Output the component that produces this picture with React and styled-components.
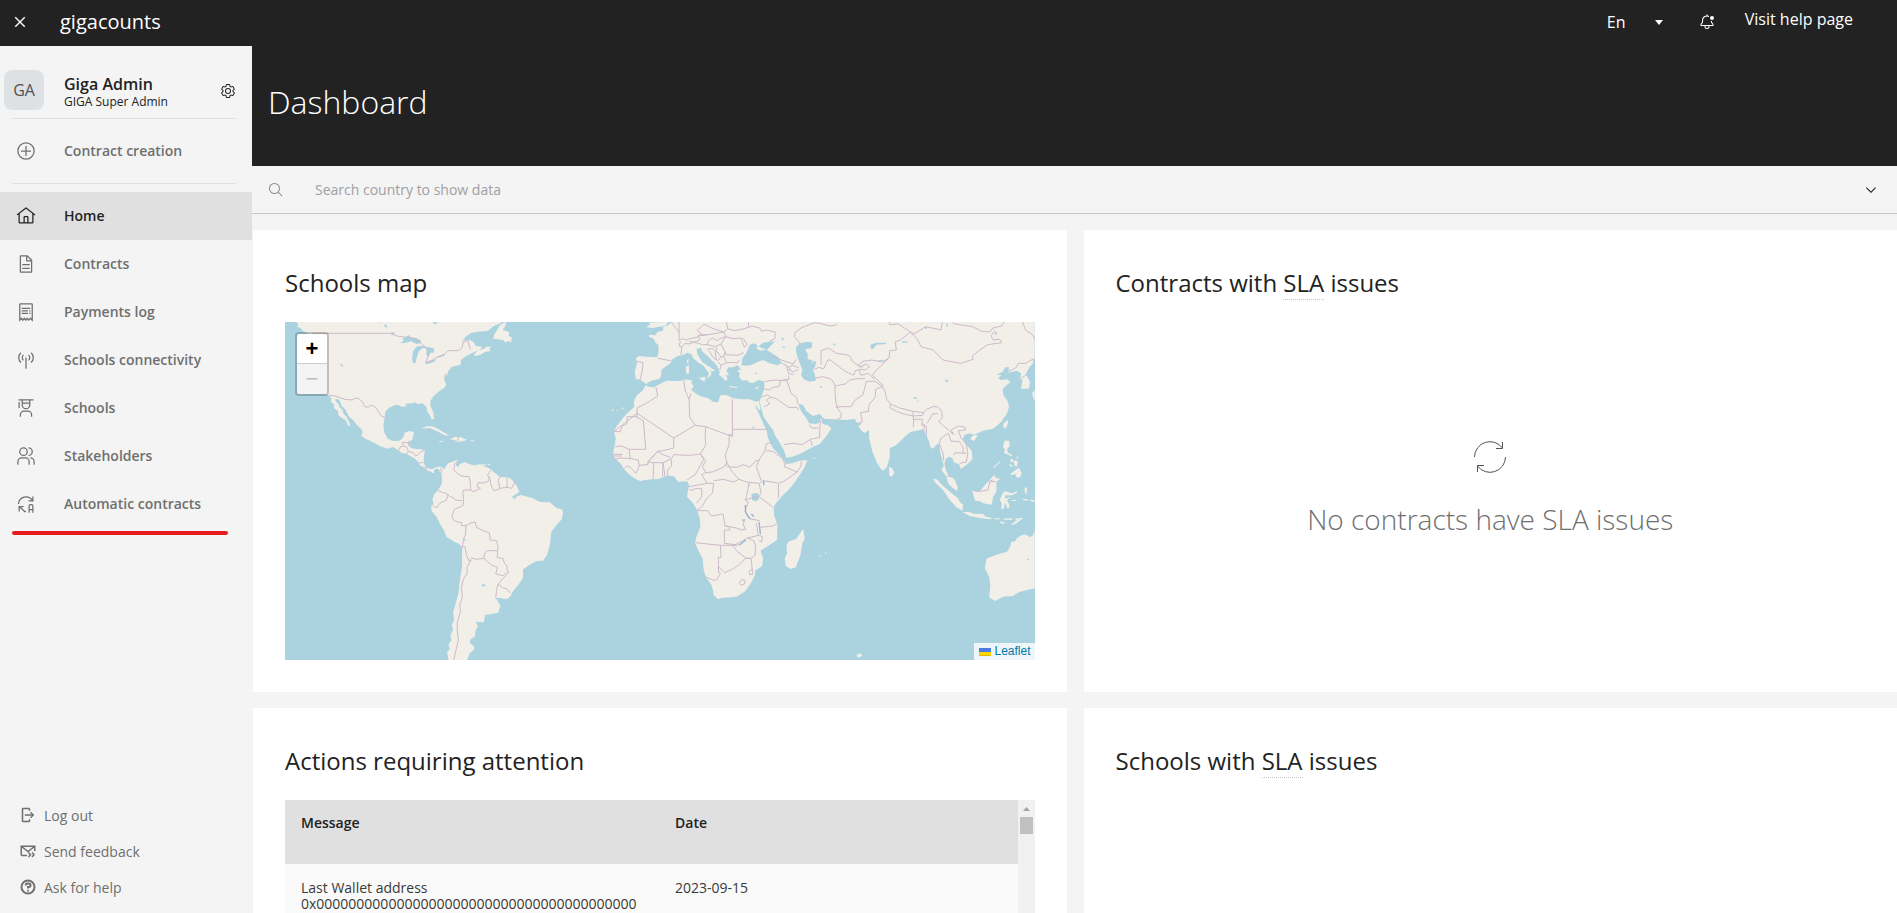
import React from 'react';
import styled, { createGlobalStyle } from 'styled-components';

const Global = createGlobalStyle`
  * { box-sizing: border-box; }
  body { margin: 0; font-family: 'Open Sans', sans-serif; background: #f4f4f4; color: #222222; }
  button, input, select { font: inherit; color: inherit; border: 0; background: none; padding: 0; margin: 0; }
  button { cursor: pointer; }
  h1, h2, p { margin: 0; }
  h1, h2 { font-weight: 400; }
  a { color: inherit; text-decoration: none; }
`;

const Page = styled.div`
  display: flex;
  flex-direction: column;
  height: 100vh;
  overflow: hidden;
`;

const TopBar = styled.header`
  display: flex;
  flex: none;
  height: 46px;
  background: #222222;
  color: #ffffff;
`;

const CloseButton = styled.button`
  display: flex;
  align-items: center;
  justify-content: center;
  width: 40px;
  height: 44px;
`;

const Brand = styled.a`
  margin-left: 20px;
  font-size: 20px;
  line-height: 44px;
`;

const TopActions = styled.div`
  display: flex;
  align-items: center;
  height: 44px;
  margin-left: auto;
  padding-right: 44px;
`;

const Language = styled.label`
  display: grid;
  grid-template-columns: 1fr 16px;
  align-items: center;
  width: 60px;
  margin-right: 32px;

  select {
    grid-area: 1 / 1 / 2 / 3;
    appearance: none;
    width: 100%;
    font-size: 16px;
    line-height: 24px;
  }

  svg {
    grid-area: 1 / 2 / 2 / 3;
    pointer-events: none;
  }
`;

const BellButton = styled.button`
  display: flex;
  margin-right: 30px;
`;

const HelpLink = styled.a`
  padding-bottom: 6px;
  font-size: 16px;
  line-height: 24px;
`;

const Body = styled.div`
  display: flex;
  flex: 1;
  min-height: 0;
`;

const Sidebar = styled.aside`
  display: flex;
  flex: none;
  flex-direction: column;
  width: 252px;
  padding-bottom: 8px;
`;

const User = styled.div`
  display: flex;
  align-items: center;
  height: 72px;
  padding: 16px 16px 0 4px;
`;

const Avatar = styled.span`
  display: flex;
  align-items: center;
  justify-content: center;
  width: 40px;
  height: 40px;
  margin-right: 20px;
  border-radius: 8px;
  background: #dde1e4;
  color: #525252;
  font-size: 16px;
`;

const UserText = styled.div`
  padding-top: 4px;
`;

const UserName = styled.p`
  font-size: 16px;
  font-weight: 600;
  line-height: 20px;
`;

const UserRole = styled.p`
  font-size: 12px;
  line-height: 16px;
`;

const SettingsButton = styled.button`
  display: flex;
  margin-left: auto;
  padding-top: 2px;
`;

const Rule = styled.hr`
  width: 224px;
  height: 1px;
  margin: 0 12px;
  border: 0;
  background: #e0e0e0;
`;

const NavGroup = styled.nav`
  padding: 8px 0;
`;

const NavItem = styled.a`
  display: flex;
  align-items: center;
  gap: 28px;
  height: 48px;
  padding-left: 16px;
  background: ${(p) => (p.$active ? '#e0e0e0' : 'transparent')};
  color: ${(p) => (p.$active ? '#222222' : '#6f6f6f')};
  font-size: 14px;
  font-weight: 600;

  span { padding-bottom: 2px; }
`;

const Marker = styled.div`
  width: 216px;
  height: 4px;
  margin: 3px 12px;
  border-radius: 2px;
  background: #e71d1d;
`;

const FooterNav = styled.nav`
  margin-top: auto;
`;

const FooterLink = styled.a`
  display: flex;
  align-items: center;
  gap: 8px;
  height: 36px;
  padding-left: 20px;
  color: #6f6f6f;
  font-size: 14px;
`;

const Main = styled.main`
  display: flex;
  flex: 1;
  flex-direction: column;
  min-width: 0;
  overflow: hidden;
`;

const Banner = styled.div`
  flex: none;
  height: 120px;
  padding: 34px 16px;
  background: #222222;
  color: #ffffff;

  h1 {
    font-size: 32px;
    font-weight: 300;
    line-height: 44px;
  }
`;

const SearchBar = styled.label`
  display: flex;
  flex: none;
  align-items: center;
  height: 48px;
  padding: 0 18px 0 16px;
  border-bottom: 1px solid #c6c6c6;

  svg:first-child { color: #8d8d8d; }

  input {
    flex: 1;
    margin-left: 31px;
    outline: 0;
    font-size: 14px;
    line-height: 20px;
  }

  input::placeholder { color: #a0a0a0; opacity: 1; }
`;

const Grid = styled.div`
  display: grid;
  grid-template-columns: minmax(0, 1fr) minmax(0, 1fr);
  gap: 16px 17px;
  padding: 16px 0 0 1px;
`;

const Card = styled.section`
  display: flex;
  flex-direction: column;
  min-height: 462px;
  padding: 32px;
  background: #ffffff;
`;

const CardTitle = styled.h2`
  height: 60px;
  font-size: 24px;
  line-height: 42px;

  abbr {
    display: inline-block;
    line-height: 32px;
    border-bottom: 1px dotted #c6c6c6;
    text-decoration: none;
  }
`;

const EmptyState = styled.div`
  display: flex;
  flex: 1;
  flex-direction: column;
  align-items: center;
  justify-content: center;
  gap: 26px;
  padding-bottom: 2px;
  color: #6f6f6f;
  font-size: 28px;
  font-weight: 300;
  line-height: 40px;
`;

const MapFrame = styled.div`
  position: relative;
  height: 338px;
  overflow: hidden;
  background: #aad3df;
`;

const MapDrawing = styled.svg`
  display: block;
  width: 100%;
  height: 100%;
`;

const ZoomControl = styled.div`
  position: absolute;
  top: 10px;
  left: 10px;
  border: 2px solid rgba(0, 0, 0, 0.2);
  border-radius: 4px;
  background-clip: padding-box;
`;

const ZoomButton = styled.button`
  display: block;
  width: 30px;
  height: 30px;
  border-bottom: ${(p) => (p.disabled ? '0' : '1px solid #cccccc')};
  border-radius: ${(p) => (p.disabled ? '0 0 2px 2px' : '2px 2px 0 0')};
  background: ${(p) => (p.disabled ? '#f4f4f4' : '#ffffff')};
  color: ${(p) => (p.disabled ? '#bbbbbb' : '#000000')};
  font: ${(p) => (p.disabled ? 400 : 700)} 22px/30px 'Liberation Sans', sans-serif;
`;

const Attribution = styled.a`
  position: absolute;
  right: 0;
  bottom: 0;
  display: flex;
  align-items: center;
  gap: 3px;
  padding: 0 4px 0 5px;
  background: rgba(255, 255, 255, 0.8);
  color: #0078a8;
  font: 12px/17px 'Liberation Sans', sans-serif;
`;

const TableFrame = styled.div`
  display: flex;
  height: 338px;
`;

const Table = styled.table`
  flex: 1;
  border-collapse: collapse;
  table-layout: fixed;
  font-size: 14px;
  text-align: left;

  th, td {
    padding: 16px;
    vertical-align: top;
  }

  th {
    height: 64px;
    background: #e0e0e0;
    font-weight: 600;
    line-height: 14px;
  }

  th:first-child { width: 374px; }

  td {
    background: #fafafa;
    color: #393939;
    line-height: 16px;
  }
`;

const ScrollTrack = styled.div`
  width: 17px;
  padding: 0 2px;
  background: #f1f1f1;

  svg { display: block; width: 13px; height: 17px; }
`;

const ScrollThumb = styled.div`
  height: 17px;
  background: #c1c1c1;
`;

const Icon = ({ size = 20, children }) => (
  <svg width={size} height={size} viewBox="0 0 32 32" fill="currentColor" aria-hidden="true">
    {children}
  </svg>
);

const icons = {
  close: <path d="M17.4141 16 26 7.4141 24.5859 6 16 14.5859 7.4143 6 6 7.4141 14.5859 16 6 24.5859 7.4143 26 16 17.4141 24.5859 26 26 24.5859 17.4141 16z" stroke="currentColor" />,
  caret: <path d="M24 12 16 22 8 12z" />,
  bell: (
    <>
      <path d="M28.707 19.293 26 16.5859V14H24v3a1 1 0 0 0 .293.707L27 20.4141V22H5V20.4141L7.707 17.707A1 1 0 0 0 8 17V13a7.985 7.985 0 0 1 12-6.918V3.8472a9.8961 9.8961 0 0 0-3-.7969V1H15V3.0505A10.0136 10.0136 0 0 0 6 13v3.5859L3.293 19.293A1 1 0 0 0 3 20v3a1 1 0 0 0 1 1h7v1a5 5 0 0 0 10 0V24h7a1 1 0 0 0 1-1V20a1 1 0 0 0-.293-.707ZM19 25a3 3 0 0 1-6 0V24h6Z" />
      <circle cx="26" cy="8" r="4" />
    </>
  ),
  settings: (
    <>
      <path d="M27 16.76c0-.25 0-.5 0-.76s0-.51 0-.77l1.92-1.68A2 2 0 0 0 29.3 11L26.94 7a2 2 0 0 0-1.73-1 2 2 0 0 0-.64.1l-2.43.82a11.35 11.35 0 0 0-1.31-.75l-.51-2.52a2 2 0 0 0-2-1.61H13.64a2 2 0 0 0-2 1.61l-.51 2.52a11.48 11.48 0 0 0-1.32.75L7.43 6.06A2 2 0 0 0 6.79 6 2 2 0 0 0 5.06 7L2.7 11a2 2 0 0 0 .41 2.51L5 15.24c0 .25 0 .5 0 .76s0 .51 0 .77L3.11 18.45A2 2 0 0 0 2.7 21L5.06 25a2 2 0 0 0 1.73 1 2 2 0 0 0 .64-.1l2.43-.82a11.35 11.35 0 0 0 1.31.75l.51 2.52a2 2 0 0 0 2 1.61h4.72a2 2 0 0 0 2-1.61l.51-2.52a11.48 11.48 0 0 0 1.32-.75l2.42.82a2 2 0 0 0 .64.1 2 2 0 0 0 1.73-1L29.3 21a2 2 0 0 0-.41-2.51ZM25.21 24l-3.43-1.16a8.86 8.86 0 0 1-2.71 1.57L18.36 28H13.64l-.71-3.55a9.36 9.36 0 0 1-2.7-1.57L6.79 24 4.43 20l2.72-2.4a8.9 8.9 0 0 1 0-3.13L4.43 12 6.79 8l3.43 1.16a8.86 8.86 0 0 1 2.71-1.57L13.64 4h4.72l.71 3.55a9.36 9.36 0 0 1 2.7 1.57L25.21 8 27.57 12l-2.72 2.4a8.9 8.9 0 0 1 0 3.13L27.57 20Z" />
      <path d="M16 22a6 6 0 1 1 6-6A5.94 5.94 0 0 1 16 22Zm0-10a3.91 3.91 0 0 0-4 4 3.91 3.91 0 0 0 4 4 3.91 3.91 0 0 0 4-4A3.91 3.91 0 0 0 16 12Z" />
    </>
  ),
  add: (
    <>
      <circle cx="16" cy="16" r="13" fill="none" stroke="currentColor" strokeWidth="2" />
      <path d="M24 15H17V8H15v7H8v2h7v7h2V17h7z" />
    </>
  ),
  home: <path d="M16.6123 2.2138a1.01 1.01 0 0 0-1.2427 0L1 13.4194l1.2427 1.5717L4 13.6208V26a2.0041 2.0041 0 0 0 2 2H26a2.0037 2.0037 0 0 0 2-2V13.63L29.7573 15 31 13.4282ZM18 26H14V18h4Zm2 0V18a2.0023 2.0023 0 0 0-2-2H14a2.002 2.002 0 0 0-2 2v8H6V12.0615l10-7.79 10 7.8005V26Z" />,
  document: (
    <>
      <path d="M25.7 9.3l-7-7C18.5 2.1 18.3 2 18 2H8C6.9 2 6 2.9 6 4v24c0 1.1.9 2 2 2h16c1.1 0 2-.9 2-2V10C26 9.7 25.9 9.5 25.7 9.3zM18 4.4l5.6 5.6H18V4.4zM24 28H8V4h8v6c0 1.1.9 2 2 2h6V28z" />
      <path d="M10 22h12v2H10zM10 16h12v2H10z" />
    </>
  ),
  receipt: (
    <>
      <path d="M6 29V4a1 1 0 0 1 1-1H25a1 1 0 0 1 1 1V29L23 26 20.5 29 18 26 16 29 13.5 26 11 29 9 26Z" fill="none" stroke="currentColor" strokeWidth="2" />
      <path d="M9 9h14v2H9zM9 13h10v2H9zM9 17h10v2H9zM21 13h2v2h-2zM21 17h2v2h-2z" />
    </>
  ),
  signal: (
    <path d="M16 12V30M12 16.500A5.500 5.500 0 0 1 12 8M20 16.500A5.500 5.500 0 0 0 20 8M8 20A10 10 0 0 1 8 4.500M24 20A10 10 0 0 0 24 4.500" fill="none" stroke="currentColor" strokeWidth="2" />
  ),
  education: <path d="M26 30H24V27a5.0059 5.0059 0 0 0-5-5H13a5.0059 5.0059 0 0 0-5 5v3H6V27a7.0082 7.0082 0 0 1 7-7h6a7.0082 7.0082 0 0 1 7 7ZM5 6A1 1 0 0 0 4 7v9H6V7A1 1 0 0 0 5 6ZM4 2V4H9v7a7 7 0 0 0 14 0V4h5V2Zm7 2H21V7H11Zm5 12a5 5 0 0 1-5-5V9H21v2A5 5 0 0 1 16 16Z" />,
  people: <path d="M30 30H28V25a5.0057 5.0057 0 0 0-5-5V18a7.0078 7.0078 0 0 1 7 7ZM22 30H20V25a5.0059 5.0059 0 0 0-5-5H9a5.0059 5.0059 0 0 0-5 5v5H2V25a7.0082 7.0082 0 0 1 7-7h6a7.0082 7.0082 0 0 1 7 7ZM20 2V4a5 5 0 0 1 0 10v2A7 7 0 0 0 20 2ZM12 4A5 5 0 1 1 7 9a5 5 0 0 1 5-5m0-2a7 7 0 1 0 7 7A7 7 0 0 0 12 2Z" />,
  automatic: (
    <path d="M4 16A12 12 0 0 1 26 10M27 4V11H20M5 28V20H12M5 20L14 28H16M21 30V19A2 2 0 0 1 23 17H25A2 2 0 0 1 27 19V30M21 25H27" fill="none" stroke="currentColor" strokeWidth="2" />
  ),
  logout: (
    <path d="M6 30H18a2.0023 2.0023 0 0 0 2-2V25H18v3H6V4H18V7h2V4a2.0023 2.0023 0 0 0-2-2H6A2.0023 2.0023 0 0 0 4 4V28A2.0023 2.0023 0 0 0 6 30ZM20.586 20.586 24.172 17 10 17 10 15 24.172 15 20.586 11.414 22 10 28 16 22 22z" stroke="currentColor" />
  ),
  feedback: (
    <path d="M14 25H4A1.5 1.5 0 0 1 2.500 23.500V6.500H29.500V16M3 7L16 17L29 7M17 19L21 23.500L17 28M24 19L28 23.500L24 28" fill="none" stroke="currentColor" strokeWidth="3" />
  ),
  help: (
    <>
      <path d="M16 3A13 13 0 1 0 16 29A13 13 0 1 0 16 3M11.500 13V12.500A3.500 3.500 0 0 1 15 9H17.500A3.500 3.500 0 0 1 17.500 16H16V19" fill="none" stroke="currentColor" strokeWidth="4" />
      <circle cx="16" cy="23.500" r="2" />
    </>
  ),
  search: <path d="M29 27.5859l-7.5521-7.5521a11.0177 11.0177 0 1 0-1.4141 1.4141L27.5859 29ZM4 13a9 9 0 1 1 9 9A9.01 9.01 0 0 1 4 13Z" />,
  chevron: <path d="M16 22 6 12 7.4 10.6 16 19.2 24.6 10.6 26 12z" />,
};

/* Land and border outlines; each list is drawn in its own coordinate frame. */
const westLand = [
  'M80 36L86 44 82 50 92 54 98 62 112 68 125 76 120 120 118 170 128 215 150 240 175 256 185 264 184 276 194 284 192 294 206 304 205 314 216 324 228 330 234 346 242 349 240 340 236 332 230 320 222 312 218 300 210 292 206 282 197 272 198 266 208 269 213 280 216 288 228 300 232 310 238 320 250 330 262 345 275 358 278 366 275 378 290 388 310 397 330 408 352 416 370 411 385 420 395 428 412 432 425 440 437 447 448 458 450 466 462 471 470 481 482 484 489 490 494 487 492 480 500 476 508 478 509 484 515 489 522 476 512 470 500 472 485 478 470 473 462 460 462 440 466 422 455 418 440 417 425 415 418 408 416 398 428 388 433 366 420 363 405 368 401 382 390 392 370 393 354 386 343 366 341 345 345 322 347 305 357 294 370 287 382 284 396 290 412 289 406 281 430 280 436 276 442 282 458 280 470 290 472 304 480 316 486 329 493 326 490 306 482 288 482 272 492 258 508 244 526 232 529 222 523 208 526 188 531 198 536 182 546 170 573 164 573 150 590 138 606 130 628 120 638 110 618 108 612 97 600 90 578 92 590 78 606 68 622 66 655 62 672 48 692 40 698 36Z',
  'M612 134L626 120 640 118 650 110 664 110 658 118 664 122 646 126 632 134 616 138Z',
  'M670 86L674 72 682 60 690 46 702 38 710 36 706 50 698 60 708 62 720 68 716 78 726 82 724 98 716 92 708 98 700 90 686 88Z',
  'M455 357L470 349 488 349 506 357 520 366 540 377 524 376 508 367 492 359 478 354Z',
  'M540 388L556 380 574 382 592 390 576 394 564 397 556 391Z',
  'M603 391h10v3h-10zM509 392h12v3h-12zM655 461h6v4h-6z',
  'M514 488L517 504 516 522 505 540 492 555 488 570 492 583 484 588 486 604 500 620 510 640 522 660 530 680 550 693 568 702 578 712 577 740 577 770 572 800 570 815 566 850 558 880 550 905 553 930 546 945 550 960 542 976 545 990 536 1004 540 1018 532 1026 536 1050 592 1050 600 1030 614 1018 612 1008 600 1000 602 988 615 980 618 960 625 950 618 935 642 937 646 915 665 912 685 908 692 888 682 870 678 864 690 864 712 868 724 856 730 843 745 825 760 805 760 778 780 764 800 753 820 752 832 735 840 705 845 665 860 645 876 628 880 606 876 598 860 594 840 577 812 576 798 570 790 565 765 558 752 555 740 560 734 568 726 560 740 552 749 545 742 530 732 514 718 503 690 500 675 488 658 475 640 468 655 464 630 463 612 466 598 462 585 457 570 462 566 472 558 465 565 448 552 454 535 460 525 475Z',
];

const westWater = [
  'M390 100L402 92 398 86 418 75 422 82 440 84 454 92 452 100 440 102 424 94 410 98Z',
  'M430 124L440 110 455 108 470 112 455 116 446 126 440 146 437 158 430 160 427 146Z',
  'M458 108L476 112 492 114 494 128 482 128 476 142 470 134 472 120Z',
  'M466 162L480 152 502 148 492 156 474 162ZM502 140L524 132 526 136 506 143Z',
  'M365 66L376 68 372 76 364 74ZM210 160L218 164 222 170 214 168ZM332 36L336 50 334 38ZM344 42L352 46 350 54 345 50ZM636 823h10v6h-10zM580 685l8 4-2 4-6-3zM490 37h12v4h-12z',
];

const westBorders = [
  'M125 70H365L380 78 410 82 430 85 455 100 472 118 475 140 467 158 485 152 505 140 525 133 535 122 565 122 578 112 580 95 595 92 598 106 602 118',
  'M178 256L195 258 225 268 250 270 254 265 266 265 280 278 284 289 296 292 302 286 312 287 322 298 328 308 335 318 346 323',
  'M388 420L392 410 401 408 397 398 416 398 416 406 M416 398L418 392 M401 408L412 412 416 425 410 432 M416 425L430 428 437 438 M437 438L446 434 455 424 465 422 M448 458H460 M467 468L470 481 M512 474L516 488',
  'M567 450L555 462 552 480 562 490 575 498 598 500 602 520 602 540 612 545 632 535 622 530 626 518 640 519 655 514 661 502 653 496 662 482',
  'M655 500L662 510 662 520 672 542 690 537 688 525 685 512 692 500 M690 535L712 532V505 M712 532L725 535 735 518 730 512',
  'M602 540L582 540 579 548 582 572 580 588 M505 541L518 548 530 550 540 560 550 562 556 570 578 572 M535 552L530 570 510 580 502 592 490 590',
  'M578 588L555 597 546 618 552 630 562 636 575 637 575 647 590 647 600 640 616 636 620 652 640 662 658 668 662 690 680 692 685 710 682 742 700 746 704 760 712 768 712 780 718 786 685 822 700 834 710 836 722 850',
  'M588 647L588 672 582 685 578 710H586L590 735 597 752 606 744 620 748 642 745 644 732 652 722 682 722',
  'M642 745L665 765 683 772 678 792 700 797 712 785 M685 822L680 844 678 865',
  'M597 752L604 752 592 770V790L580 810 575 835 578 860 570 885 572 905 562 940 563 965 566 990 560 1015 552 1050',
  'M565 380V395',
];

const eastLand = [
  'M215 36L205 46 190 52 190 62 172 66 168 76 148 74 148 80 162 86 166 96 176 106 176 130 172 142 140 140 118 138 108 145 112 160 105 185 108 208 120 208 132 217 140 222 148 215 155 212 178 207 184 198 185 180 200 168 212 160 215 150 234 138 250 135 262 128 275 132 280 144 296 158 312 168 322 182 328 190 322 206 332 198 336 188 330 182 344 184 345 180 325 168 310 158 300 145 292 130 291 117 303 113 308 125 320 135 335 150 346 160 354 172 360 186 358 195 372 206 378 214 384 206 378 196 388 196 380 182 386 172 400 172 412 166 420 172 414 182 420 190 418 200 428 212 440 210 450 218 462 218 476 210 494 214 493 240 484 262 480 272 483 290 487 302 490 318 505 340 520 360 525 375 540 398 552 420 560 443 575 441 600 432 640 410 660 402 680 378 695 355 685 346 668 341 666 326 661 328 660 338 648 342 628 340 623 330 618 322 606 307 597 288 600 282 608 284 614 292 620 304 640 318 660 312 672 326 700 328 740 330 765 326 772 340 788 340 776 348 785 362 796 370 802 362 808 362 808 385 818 425 830 455 842 475 850 482 862 470 870 440 870 415 890 405 915 380 932 366 950 362 970 358 980 375 988 395 992 412 1000 416 1012 402 1020 404 1020 420 1028 450 1032 468 1025 480 1040 500 1045 520 1060 535 1072 543 1074 530 1064 508 1045 495 1038 480 1034 462 1038 446 1048 440 1058 444 1062 457 1078 463 1083 477 1103 463 1118 448 1116 422 1098 402 1088 386 1096 374 1110 370 1122 374 1150 362 1180 356 1205 335 1222 310 1228 290 1222 270 1212 258 1208 240 1214 232 1232 216 1222 208 1202 210 1195 204 1206 196 1190 194 1208 186 1216 172 1228 172 1226 188 1250 182 1264 190 1262 204 1268 210 1264 236 1288 236 1291 215 1278 192 1290 170 1300 160 1300 150 1305 148 1305 36Z',
  'M140 52L152 42 146 38 190 36 206 36 196 48 178 50 160 54Z',
  'M478 272L468 275 450 268 430 268 400 265 380 255 362 256 358 268 355 277 340 275 325 265 300 258 285 248 274 240 282 228 275 220 278 212 258 208 240 213 220 213 200 212 175 225 160 232 145 230 138 225 130 240 110 258 102 275 104 290 80 312 65 330 50 350 42 365 48 385 45 405 40 430 45 445 62 460 75 480 90 495 110 508 122 514 135 510 160 508 175 507 200 498 222 498 235 515 262 514 268 525 264 545 262 560 280 580 292 600 300 625 302 650 290 680 286 700 300 730 308 745 312 780 318 800 335 825 340 842 342 855 355 868 365 864 410 860 435 845 452 822 466 795 466 782 487 768 490 745 482 722 510 704 532 690 533 645 523 615 522 590 530 578 550 555 575 530 600 495 615 470 623 450 600 452 575 460 560 462 548 445 520 415 505 385 500 360 488 335 475 305 465 285 470 288 478 300 482 300Z',
  'M555 745L562 730 560 706 566 695 590 686 602 668 610 656 615 685 608 700 602 735 588 772 572 777 558 768Z',
  'M868 470L878 475 884 490 876 500 868 496Z',
  'M999 505L1014 510 1026 524 1050 545 1075 565 1080 576 1090 584 1088 602 1070 592 1050 570 1030 540 1008 520Z',
  'M1088 606L1110 606 1120 611 1150 612 1158 620 1178 624 1170 628 1140 624 1110 618Z',
  'M1184 625h14l4 3h-18zM1210 626l26-1 2 4h-24zM1246 626l22-2 2 3-22 3zM1234 644l14-12 18-4-16 12-12 5zM1200 634l16 4-4 4-12-4z',
  'M1117 542L1140 544 1160 520 1172 508 1184 494 1188 504 1202 506 1190 515 1190 545 1180 560 1176 584 1150 580 1142 574 1126 572Z',
  'M1208 552L1214 544 1240 550 1250 543 1252 549 1236 556 1216 556 1216 566 1234 560 1222 570 1230 588 1224 596 1216 578 1212 598 1204 596 1206 580 1200 570Z',
  'M1214 392L1228 392 1230 408 1222 418 1224 428 1238 436 1234 439 1222 432 1212 430 1216 420 1210 410Z',
  'M1230 448l8-2 4 8-6 4zM1242 454l8-4 4 8-4 14-6-6zM1228 462l8 2 2 8-6-2zM1250 434l6 10-4 2zM1202 456l-22 20 2-6 18-16z',
  'M1232 492L1244 482 1258 474 1266 490 1262 500 1252 504 1246 492 1236 496Z',
  'M1222 330L1226 336 1218 356 1210 350 1212 340ZM1113 382L1124 375 1134 376 1124 392 1114 390Z',
  'M1276 530l6 6-2 20-6-14zM1268 566l18 2-4 4-12-2zM1290 568l15 4v5l-12-4zM1236 570h12v3h-12z',
  'M1305 660L1300 676 1290 682 1280 674 1268 674 1252 684 1246 694 1234 696 1232 708 1222 725 1190 734 1180 738 1160 746 1155 775 1168 800 1172 830 1168 862 1186 873 1210 860 1240 858 1260 845 1305 835Z',
  'M297 204L318 200 314 215ZM258 170L268 166 268 190 260 192ZM262 150L266 146V162L261 158ZM388 228l24 2v4l-22-2zM464 235L480 229 472 237ZM1305 240l-8 10 6 22h2z',
  'M640 442l8 1-4 3zM676 726l5 3-5 3zM657 735h5v4h-5zM770 1034l12-4 6 8-14 5zM36 298h5v4h-5zM50 300h4v3h-4zM66 294l6-2-4 8z',
];

const eastWater = [
  'M425 165L428 145 440 128 450 105 462 100 474 106 470 116 482 122 500 119 515 128 535 142 546 158 534 166 510 160 490 150 468 158 455 165 440 167Z',
  'M476 110L490 98 510 95 526 94 512 108 502 120 492 116Z',
  'M588 112L600 100 625 95 638 98 636 114 616 118 624 132 624 148 636 150 636 158 648 166 640 180 646 196 648 212 630 215 612 208 604 195 608 180 596 150 590 130Z',
  'M636 152L650 155 648 164 640 160Z',
  'M455 552L475 548 478 566 470 574 457 570Z',
  'M812 104L828 98 860 98 858 102 830 104 820 118 814 116ZM838 150l14 0 -2 4h-12zM1040 40l4 0v12l-4-4zM1036 208l8 2 2 6-8 0zM698 101h12l-6 6zM660 228h6v5h-6zM466 188h7v4h-7zM942 262h8v5h-8zM950 270l10 6-6 0zM976 50h6v6h-6zM908 94l16 0 0 3-16 2zM544 80l10 8-6 4zM548 110h8v4h-8zM566 170l8 6-4 4zM456 350l8 0-4 6zM1282 746h6v5h-6zM1186 66h5v8h-5z',
  'M412 176h12v4h-12z',
];

const rivers = 'M437 585L437 605 446 620 452 626M455 612L462 620M478 636L482 672M430 628V634M420 704L438 690M492 512V526';

const eastBorders = [
  'M215 36L218 42 238 66M238 36V92M175 145L190 148 212 152M110 154L130 158 128 180 124 196 122 208M238 92L246 86 262 90 270 86 292 82 296 76 308 74M238 108L246 110 244 134M238 108L242 94M246 110L256 100 268 102 290 94 300 90M268 94L290 98 308 104 M292 62L308 46 316 44 340 56M292 62L308 74 326 74M300 90L296 78 326 74 350 70 372 66M340 56L372 66 378 80 360 86 352 92 338 84 326 92 322 104 308 104M378 80L364 102 346 110 332 106 322 104M380 36L384 56 372 66M364 102L376 126 372 138M378 80L400 86 424 84 434 112 442 104 430 84M376 126L378 134 412 136 432 128M322 118L340 116 346 122 350 150 340 142 328 122M350 112L350 122 364 142 352 154M364 142L372 138 380 158 364 166 360 180M364 166L356 156M380 158L414 158 418 150',
  'M384 56L404 62 426 58 446 52 446 36M446 52L456 48 480 54 486 64 500 60 526 66 526 86 508 94M515 138L545 150 580 162 590 148M545 160L560 166 564 172 580 166 598 174 M560 166L566 190 582 194M566 178L580 186 596 178M496 214L526 210 552 212 568 208 566 196M494 236L508 240 520 232 538 230 542 212M484 262L504 254 512 262 500 270 510 282 492 290M512 262L530 266 566 292 592 292 596 300M542 212L560 208 574 250 590 262 596 284',
  'M645 205L668 200 690 206 700 214 706 228 706 250 708 276 716 300 724 308 724 322 712 328M604 104L584 80 586 68 604 54 618 48 644 38 660 40 690 48 712 44 M664 164V122L686 114 710 130 740 134 752 140 756 152 774 166 790 172 M645 178L656 172 672 176 684 150 692 150 720 172 736 184 762 196M706 228L736 222 750 210 772 206 796 206 M720 290L754 290 764 272 790 254 800 214 826 214 848 230M774 166L790 154 816 150 848 156 868 144M762 196L766 182 778 180 784 196M784 196L806 190 824 208M778 172L800 162 810 170 796 180 778 178',
  'M724 290L708 292M848 230L856 244 860 266 872 282 900 294 940 304 940 318 912 312 890 304 870 292 872 282M848 230L828 238 826 262 808 284 806 304 782 308 788 334 770 342M940 304L972 308 980 298 1000 290 1014 290 1026 304 1028 324 1016 334 1046 360 1062 374M940 318L968 316 972 308M940 318L942 336 940 352M942 328L968 328 966 346 974 346 972 366M968 340L980 350 980 374M1000 310L982 340M1014 310L1000 312M1062 374L1054 360 1076 348 1096 352 1098 360 1076 362 1084 384 1100 404 1104 430 1100 456 1080 460M1046 370L1054 394 1078 394 1090 412 1090 430M1046 370L1024 384 1018 400 1030 430 1032 452M1062 436L1066 428 1100 430',
  'M868 36L870 44 896 42 932 66 942 72 978 50 1024 60 1028 36M1058 38L1066 42 1118 50 1146 64 1170 66 1180 54 1206 48 1212 36M932 66L952 86 964 110 1000 120 1030 150 1082 160 1120 148 1118 138 1140 120 1164 104 1206 98 1200 88 1180 90 1174 78 1186 62M932 66L902 90 886 96 890 120 870 122 868 144 828 182 818 196 852 228M1268 36L1278 60 1300 76 1305 90M1228 184L1250 172 1256 160 1278 160 1290 152 1305 146M1266 204L1280 194M1120 542L1140 544 1164 540 1170 516 1188 514M1040 498L1056 500M1166 514L1180 510',
  'M552 404L580 400 608 404 632 388M632 388L638 408M632 388L660 382 660 352 664 330M628 344L636 354 656 354',
  'M168 230L174 258 152 272 140 280 112 294V310L42 365H62L66 350 82 340V320H112M112 310L222 384M112 322V310M222 384L286 346 318 350 398 380M286 346L270 322 268 268 256 240 252 210M268 268L274 250M398 268V374H388V404L376 436 382 460 374 470 338 486 318 488M398 358H500M318 350L316 372 318 404 302 432 272 436 222 434 216 444M398 380V374M131 332L138 418H88L66 408 46 410M222 384V414L190 422 174 424 146 454 144 464M131 332L112 322',
  'M88 418L92 446 62 444 42 448M42 433H68M42 438H66M92 446L116 450 118 466 116 476 108 490 92 472 84 468 74 474M118 466L144 464 146 454 162 460 160 508M146 454L174 424 190 434 212 442M160 458H190L188 500M190 458L196 500M190 458L214 446 216 468 204 478V500M302 432L312 448 286 494 262 510M302 432L318 452 308 470 318 488 306 494 322 520 268 530M268 540H282L284 536H306L306 560 290 580M322 520H342L338 548 318 570 306 592 292 600M342 512L372 508 400 516 418 508 440 516 M374 470L382 456 M382 460L398 486 418 508M382 470L410 472 430 464 450 472 466 454 478 450M478 450L470 470 476 488 484 512M440 516L480 520 490 512 530 518 536 520M478 450L496 422 500 400 518 398M500 422L520 424 548 446 556 462 554 470 592 486 552 514 536 520V564M604 454L604 468 592 486M446 530L448 520 440 560 436 570 448 566 478 560M478 520L484 548 478 560 520 592M436 570L446 576 440 590 436 606 448 626M436 626L430 644 438 658 424 660 410 654 376 648M448 626L480 632 M292 602H324L334 618 370 612 376 648 390 650V660H374V700L406 704 444 684 476 676 470 640M482 652L520 648 530 642M478 676L488 680 486 696 478 692M288 698L360 706 410 706M410 706L424 702 M362 708L364 742H356V786L362 790 352 808 344 812 330 806 318 800M356 770L374 788 398 778 418 764 438 744M398 706L412 724 438 744 452 746 466 736 468 710 462 692 444 684M438 744L454 746 458 782M448 784L456 778 460 792 450 794ZM418 820L426 808 436 812 434 822 424 826Z',
];

const Shapes = ({ paths }) => paths.map((d) => <path key={d} d={d} />);

const WorldMap = () => (
  <MapDrawing viewBox="0 0 750 338" preserveAspectRatio="xMidYMid slice" role="img" aria-label="World map">
    <rect width="750" height="338" fill="#aad3df" />
    {[
      ['translate(-15 -12) scale(0.33333)', westLand, westWater, westBorders],
      ['translate(315 -12) scale(0.33333)', eastLand, eastWater, eastBorders],
    ].map(([transform, land, water, borders]) => (
      <g key={transform} transform={transform}>
        <g fill="#f2efe9"><Shapes paths={land} /></g>
        <g fill="#aad3df"><Shapes paths={water} /></g>
        <g fill="none" stroke="#cdb9c9" strokeWidth="3" strokeLinejoin="round"><Shapes paths={borders} /></g>
      </g>
    ))}
    <path transform="translate(315 -12) scale(0.33333)" d={rivers} fill="none" stroke="#8fb4d4" strokeWidth="4" />
  </MapDrawing>
);

const navItems = [
  ['Home', 'home'],
  ['Contracts', 'document'],
  ['Payments log', 'receipt'],
  ['Schools connectivity', 'signal'],
  ['Schools', 'education'],
  ['Stakeholders', 'people'],
  ['Automatic contracts', 'automatic'],
];

const footerItems = [
  ['Log out', 'logout'],
  ['Send feedback', 'feedback'],
  ['Ask for help', 'help'],
];

export default function App() {
  return (
    <Page>
      <Global />
      <TopBar>
        <CloseButton aria-label="Close menu"><Icon size={16}>{icons.close}</Icon></CloseButton>
        <Brand href="#">gigacounts</Brand>
        <TopActions>
          <Language>
            <select aria-label="Language"><option>En</option></select>
            <Icon size={16}>{icons.caret}</Icon>
          </Language>
          <BellButton aria-label="Notifications"><Icon size={16}>{icons.bell}</Icon></BellButton>
          <HelpLink href="#help">Visit help page</HelpLink>
        </TopActions>
      </TopBar>
      <Body>
        <Sidebar>
          <User>
            <Avatar>GA</Avatar>
            <UserText>
              <UserName>Giga Admin</UserName>
              <UserRole>GIGA Super Admin</UserRole>
            </UserText>
            <SettingsButton aria-label="Settings"><Icon size={16}>{icons.settings}</Icon></SettingsButton>
          </User>
          <Rule />
          <NavGroup>
            <NavItem href="#create"><Icon>{icons.add}</Icon><span>Contract creation</span></NavItem>
          </NavGroup>
          <Rule />
          <NavGroup>
            {navItems.map(([label, icon]) => (
              <NavItem key={label} href="#nav" $active={label === 'Home'}>
                <Icon>{icons[icon]}</Icon>
                <span>{label}</span>
              </NavItem>
            ))}
            <Marker />
          </NavGroup>
          <FooterNav>
            {footerItems.map(([label, icon]) => (
              <FooterLink key={label} href="#footer">
                <Icon size={16}>{icons[icon]}</Icon>
                {label}
              </FooterLink>
            ))}
          </FooterNav>
        </Sidebar>
        <Main>
          <Banner><h1>Dashboard</h1></Banner>
          <SearchBar>
            <Icon size={16}>{icons.search}</Icon>
            <input type="text" aria-label="Search country" placeholder="Search country to show data" />
            <Icon size={16}>{icons.chevron}</Icon>
          </SearchBar>
          <Grid>
            <Card>
              <CardTitle>Schools map</CardTitle>
              <MapFrame>
                <WorldMap />
                <ZoomControl>
                  <ZoomButton aria-label="Zoom in">+</ZoomButton>
                  <ZoomButton aria-label="Zoom out" disabled>−</ZoomButton>
                </ZoomControl>
                <Attribution href="#leaflet">
                  <svg width="12" height="8" viewBox="0 0 12 8" aria-hidden="true">
                    <path fill="#4c7be1" d="M0 0h12v4H0z" />
                    <path fill="#ffd500" d="M0 4h12v3H0z" />
                    <path fill="#e0bc00" d="M0 7h12v1H0z" />
                  </svg>
                  Leaflet
                </Attribution>
              </MapFrame>
            </Card>
            <Card>
              <CardTitle>Contracts with <abbr>SLA</abbr> issues</CardTitle>
              <EmptyState>
                <svg width="32" height="32" viewBox="0 0 32 32" fill="none" stroke="#525252" aria-hidden="true">
                  <path d="M.5 16A15.500 15.500 0 0 1 28.500 7M28.500 1V7.500H22M31.500 16A15.500 15.500 0 0 1 3.500 25M3.500 31V24.500H10" />
                </svg>
                <p>No contracts have SLA issues</p>
              </EmptyState>
            </Card>
            <Card>
              <CardTitle>Actions requiring attention</CardTitle>
              <TableFrame>
                <Table>
                  <thead>
                    <tr><th scope="col">Message</th><th scope="col">Date</th></tr>
                  </thead>
                  <tbody>
                    <tr>
                      <td>Last Wallet address<br />0x0000000000000000000000000000000000000000</td>
                      <td>2023-09-15</td>
                    </tr>
                  </tbody>
                </Table>
                <ScrollTrack>
                  <svg viewBox="0 0 13 17" aria-hidden="true"><path d="M3 11h7L6.500 7z" fill="#a3a3a3" /></svg>
                  <ScrollThumb />
                </ScrollTrack>
              </TableFrame>
            </Card>
            <Card>
              <CardTitle>Schools with <abbr>SLA</abbr> issues</CardTitle>
            </Card>
          </Grid>
        </Main>
      </Body>
    </Page>
  );
}
